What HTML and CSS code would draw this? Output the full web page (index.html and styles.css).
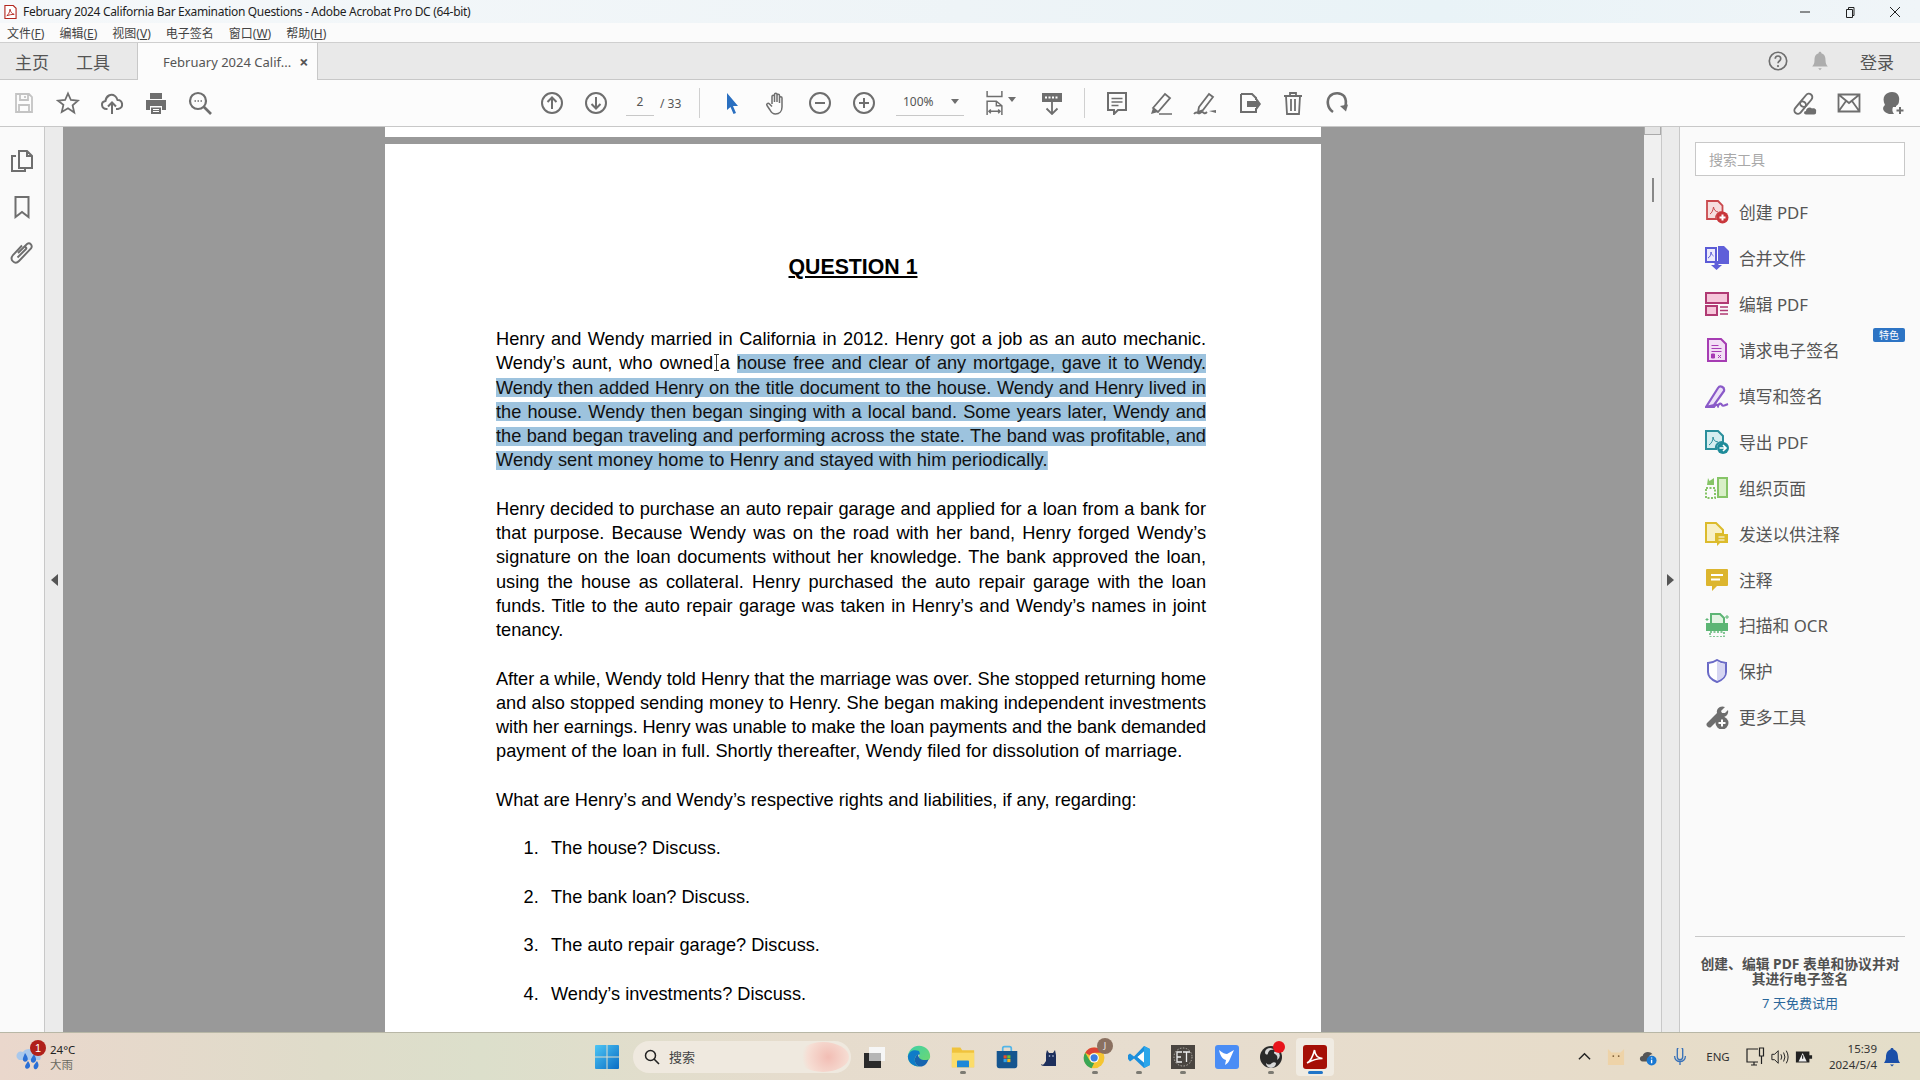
FILE: index.html
```html
<!DOCTYPE html>
<html lang="zh-CN">
<head>
<meta charset="utf-8">
<title>Adobe Acrobat Pro DC</title>
<link rel="stylesheet" href="styles.css">
</head>
<body>
<div class="app">
  <header class="titlebar">
    <svg class="pdf-mini" viewBox="0 0 14 16"><path d="M1 1h9l3 3v11H1z" fill="#fff" stroke="#b3261e" stroke-width="1.200"/><path d="M3 12c2-1 3-4 3.500-7 .5 3 2 5 4.500 5.500-3 0-5 .5-8 1.500z" fill="none" stroke="#b3261e"/></svg>
    <span class="title-text">February 2024 California Bar Examination Questions - Adobe Acrobat Pro DC (64-bit)</span>
    <div class="win-controls">
      <svg viewBox="0 0 12 12"><path d="M1 6h10" stroke="#222" stroke-width="1"/></svg>
      <svg viewBox="0 0 12 12"><path d="M2.500 3.500h6v8h-6zM4.500 3.500v-2h5.500v8h-1.500" fill="none" stroke="#222"/></svg>
      <svg viewBox="0 0 12 12"><path d="M1 1l10 10M11 1L1 11" stroke="#222" fill="none"/></svg>
    </div>
  </header>
  <nav class="menubar">
    <span>文件(<u>F</u>)</span><span>编辑(<u>E</u>)</span><span>视图(<u>V</u>)</span><span>电子签名</span><span>窗口(<u>W</u>)</span><span>帮助(<u>H</u>)</span>
  </nav>
  <div class="tabbar">
    <span class="tab-link first">主页</span>
    <span class="tab-link">工具</span>
    <div class="tab-active"><span class="tab-name">February 2024 Calif...</span><b class="tab-x">×</b></div>
    <div class="tab-right">
      <svg class="ic" viewBox="0 0 24 24"><circle cx="12" cy="12" r="9.500" fill="none" stroke="#6e6e6e" stroke-width="1.800"/><path d="M9 9.500c0-4 6-4 6 0 0 2.500-3 2.500-3 5" fill="none" stroke="#6e6e6e" stroke-width="1.800"/><circle cx="12" cy="17.500" r="1.200" fill="#6e6e6e"/></svg>
      <svg class="ic bell" viewBox="0 0 24 24"><path d="M12 2c1 0 1.500.7 1.500 1.500C17 4.500 18 7.500 18 11c0 4 1 5.500 2.500 7h-17C5 16.500 6 15 6 11c0-3.500 1-6.500 4.500-7.500C10.500 2.700 11 2 12 2zM10 20h4l-2 2z" fill="#adadad"/></svg>
      <span class="login">登录</span>
    </div>
  </div>
  <div class="toolbar">
    <div class="tool-slot"><svg class="ic" viewBox="0 0 24 24"><path d="M4 3h13l3 3v15H4zM8 3v6h8V3M13 5v2M7 21v-7h10v7" fill="none" stroke="#c4c4c4" stroke-width="1.800"/></svg></div>
    <div class="tool-slot"><svg class="ic" viewBox="0 0 24 24"><path d="M12 2.500l2.900 6.500 7 .7-5.300 4.700 1.600 7L12 17.200l-6.200 3.700 1.600-7L2.100 9.700l7-.7z" fill="none" stroke="#6e6e6e" stroke-width="1.800"/></svg></div>
    <div class="tool-slot"><svg class="ic" viewBox="0 0 24 24"><path d="M7.500 18H6.500C1.500 18 0 11 5.500 10 6 5 11 2 15 5c1.500 1 2 2.500 2.500 4 5-.5 7 7.500 .5 9h-2M12 23V12M8 15.500L12 11.500l4 4" fill="none" stroke="#6e6e6e" stroke-width="2"/></svg></div>
    <div class="tool-slot"><svg class="ic" viewBox="0 0 24 24"><path d="M6 2h12v6H6zM2 9h20v10h-4v-4H6v4H2zM7 16.500h10V23H7z" fill="#6e6e6e"/><path d="M9 18.500h6M9 20.500h6" stroke="#fff"/></svg></div>
    <div class="tool-slot"><svg class="ic" viewBox="0 0 24 24"><circle cx="10" cy="10" r="8" fill="none" stroke="#6e6e6e" stroke-width="2.200"/><path d="M16 16l7 7" stroke="#6e6e6e" stroke-width="2.600"/><path d="M6.500 10h1.500M9.500 10h1.500M12.500 10h1.500" stroke="#6e6e6e" stroke-width="1.500"/></svg></div>

    <div class="tool-group center">
      <div class="tool-slot"><svg class="ic" viewBox="0 0 24 24"><circle cx="12" cy="12" r="10" fill="none" stroke="#6e6e6e" stroke-width="2"/><path d="M12 18V6.500M7.500 11l4.500-4.500 4.500 4.500" fill="none" stroke="#6e6e6e" stroke-width="2"/></svg></div>
      <div class="tool-slot"><svg class="ic" viewBox="0 0 24 24"><circle cx="12" cy="12" r="10" fill="none" stroke="#6e6e6e" stroke-width="2"/><path d="M12 6v11.500M7.500 13l4.500 4.500 4.500-4.500" fill="none" stroke="#6e6e6e" stroke-width="2"/></svg></div>
      <div class="page-num"><span class="page-input">2</span><span class="page-total">/ 33</span></div>
      <div class="sep"></div>
      <div class="tool-slot"><svg class="ic" viewBox="0 0 24 24"><path d="M7 2l11 13h-5l3 7-2.500 1-3-7L7 19z" fill="#2a6fc0"/></svg></div>
      <div class="tool-slot"><svg class="ic" viewBox="0 0 24 24"><path d="M8 13V5.500c0-1.800 2.500-1.800 2.500 0V11M10.500 11V3.500c0-1.800 2.500-1.800 2.500 0V11M13 11V4.500c0-1.800 2.500-1.800 2.500 0V12M15.500 12V7c0-1.800 2.500-1.800 2.500 0v9c0 4-2.500 7-6.500 7-3 0-4.500-2-5.500-4L3 14.500c-1-1.500 1-3 2.500-1.500L8 15.500" fill="none" stroke="#6e6e6e" stroke-width="1.500"/></svg></div>
      <div class="tool-slot"><svg class="ic" viewBox="0 0 24 24"><circle cx="12" cy="12" r="10" fill="none" stroke="#6e6e6e" stroke-width="2"/><path d="M7 12h10" stroke="#6e6e6e" stroke-width="2"/></svg></div>
      <div class="tool-slot"><svg class="ic" viewBox="0 0 24 24"><circle cx="12" cy="12" r="10" fill="none" stroke="#6e6e6e" stroke-width="2"/><path d="M7 12h10M12 7v10" stroke="#6e6e6e" stroke-width="2"/></svg></div>
      <div class="zoom-box"><span>100%</span><i class="caret"></i></div>
      <div class="tool-slot fit"><svg class="ic fit-ic" viewBox="0 0 20 26"><path d="M2 0v6h16V0M2 26V11h10l6 5v10M12 11v5h6M4 22h12M6 20l-2 2 2 2M14 20l2 2-2 2" fill="none" stroke="#6e6e6e" stroke-width="1.600"/></svg><i class="caret small"></i></div>
      <div class="tool-slot"><svg class="ic" viewBox="0 0 24 24"><path d="M2 2h20v9H2z" fill="#6e6e6e"/><path d="M5 6.500h14" stroke="#fff" stroke-width="2" stroke-dasharray="2 1.500"/><path d="M12 11v12M6.500 17.500L12 23l5.500-5.500" fill="none" stroke="#6e6e6e" stroke-width="1.800"/></svg></div>
      <div class="sep second"></div>
      <div class="tool-slot"><svg class="ic" viewBox="0 0 24 24"><path d="M3 2h18v17h-8l-4 4v-4H3z" fill="none" stroke="#6e6e6e" stroke-width="2"/><path d="M6.500 7.500h11M6.500 11h11M6.500 14.500h7" stroke="#6e6e6e" stroke-width="1.500"/></svg></div>
      <div class="tool-slot"><svg class="ic" viewBox="0 0 24 24"><path d="M4 17L16 3l5 4L9 21z" fill="none" stroke="#6e6e6e" stroke-width="1.800"/><path d="M4 17l5 4-7 2z" fill="#6e6e6e"/><path d="M10 23h13" stroke="#6e6e6e" stroke-width="1.500"/></svg></div>
      <div class="tool-slot"><svg class="ic" viewBox="0 0 24 24"><path d="M6 16L16 3l4 3L10 19l-5 2zM1 23c3-4 4 1 6-1s3-1 4 0 2 0 3-1" fill="none" stroke="#6e6e6e" stroke-width="1.800"/><path d="M16 20l7-1v3z" fill="#6e6e6e"/></svg></div>
      <div class="tool-slot"><svg class="ic" viewBox="0 0 24 24"><path d="M4 3h11l4 4v2M19 17v4H4V3" fill="none" stroke="#6e6e6e" stroke-width="2"/><path d="M10 10h9V6l5 7-5 7v-4h-9z" fill="#6e6e6e"/></svg></div>
      <div class="tool-slot"><svg class="ic" viewBox="0 0 24 24"><path d="M3 5h18M9 5V2h6v3M5 5l1 18h12l1-18M10 8v12M14 8v12" fill="none" stroke="#6e6e6e" stroke-width="1.800"/></svg></div>
      <div class="tool-slot"><svg class="ic" viewBox="0 0 24 24"><path d="M8 21C2 17 1.500 9 5 5c4-4 11-3.500 14 0 2 3 2.500 7 1 11" fill="none" stroke="#6e6e6e" stroke-width="2.600"/><path d="M15 15l6 5.500 2-7z" fill="#6e6e6e"/></svg></div>
    </div>
    <div class="tool-group end">
      <div class="tool-slot"><svg class="ic" viewBox="0 0 24 24"><g transform="rotate(-50 11 12)" fill="none" stroke="#6e6e6e" stroke-width="1.900"><rect x="-2" y="8.500" width="14" height="7" rx="3.500"/><rect x="7" y="8.500" width="15" height="7" rx="3.500"/></g><path d="M13 23.500c-2.500 0-2.500-3.500 0-3.500 0-3 4-4.500 6-2.500 2.500-1 5 1 4 3.500 .5 1-.5 2.500-2 2.500z" fill="#6e6e6e"/></svg></div>
      <div class="tool-slot"><svg class="ic" viewBox="0 0 24 24"><path d="M1.500 3.500h21v17h-21zM1.500 3.500L12 12l10.500-8.500M1.500 20.500L9 10M22.500 20.500L15 10" fill="none" stroke="#6e6e6e" stroke-width="1.800"/></svg></div>
      <div class="tool-slot"><svg class="ic" viewBox="0 0 24 24"><path d="M11 1c6 0 8 5 7 9 0 2-1 4-3 5v1h-3c-1 2-1 5 1 7H8c-7-2-7-7-4-9C0 6 5 1 11 1z" fill="#6e6e6e"/><path d="M19 16v7M15.500 19.500h7" stroke="#6e6e6e" stroke-width="2"/></svg></div>
    </div>
  </div>
  <main class="workspace">
    <aside class="rail">
      <svg class="ic" viewBox="0 0 24 24"><path d="M9 17V2h8l5 5v12H9zM17 2v5h5M6 7H2v15h13v-3" fill="none" stroke="#6e6e6e" stroke-width="2"/></svg>
      <svg class="ic" viewBox="0 0 24 24"><path d="M5.500 2h13v20L12 17l-6.500 5z" fill="none" stroke="#6e6e6e" stroke-width="2"/></svg>
      <svg class="ic" viewBox="0 0 24 24"><path d="M8 12l9-9c3-2 6 1.500 4 4.500L9 20c-4 4-10-1-6-6l9-9.500M7.500 16.500L16 8c1-1-.5-2.500-1.500-1.500" fill="none" stroke="#6e6e6e" stroke-width="1.900"/></svg>
    </aside>
    <div class="strip left"><i class="tri-left"></i></div>
    <section class="doc">
      <div class="prev-page"></div>
      <article class="page">
        <h1 class="q-title">QUESTION 1</h1>
        <div class="para">
          <div class="ln">Henry and Wendy married in California in 2012. Henry got a job as an auto mechanic.</div>
          <div class="ln">Wendy’s aunt, who owned<span class="ibeam"></span> a <mark class="sel">house free and clear of any mortgage, gave it to Wendy.</mark></div>
          <div class="ln sel-line">Wendy then added Henry on the title document to the house. Wendy and Henry lived in</div>
          <div class="ln sel-line">the house. Wendy then began singing with a local band. Some years later, Wendy and</div>
          <div class="ln sel-line">the band began traveling and performing across the state. The band was profitable, and</div>
          <div class="ln last loose-a"><mark class="sel">Wendy sent money home to Henry and stayed with him periodically.</mark></div>
        </div>
        <div class="para">
          <div class="ln">Henry decided to purchase an auto repair garage and applied for a loan from a bank for</div>
          <div class="ln">that purpose. Because Wendy was on the road with her band, Henry forged Wendy’s</div>
          <div class="ln">signature on the loan documents without her knowledge. The bank approved the loan,</div>
          <div class="ln">using the house as collateral. Henry purchased the auto repair garage with the loan</div>
          <div class="ln">funds. Title to the auto repair garage was taken in Henry’s and Wendy’s names in joint</div>
          <div class="ln last">tenancy.</div>
        </div>
        <div class="para">
          <div class="ln tight-a">After a while, Wendy told Henry that the marriage was over. She stopped returning home</div>
          <div class="ln">and also stopped sending money to Henry. She began making independent investments</div>
          <div class="ln tight-b">with her earnings. Henry was unable to make the loan payments and the bank demanded</div>
          <div class="ln last loose-b">payment of the loan in full. Shortly thereafter, Wendy filed for dissolution of marriage.</div>
        </div>
        <div class="para"><div class="ln last">What are Henry’s and Wendy’s respective rights and liabilities, if any, regarding:</div></div>
        <ol class="qs">
          <li>The house? Discuss.</li>
          <li>The bank loan? Discuss.</li>
          <li>The auto repair garage? Discuss.</li>
          <li>Wendy’s investments? Discuss.</li>
        </ol>
      </article>
    </section>
    <div class="vscroll"><div class="vs-btn"></div><div class="vs-thumb"></div></div>
    <div class="strip right"><i class="tri-right"></i></div>
    <aside class="tools">
      <div class="tool-search">搜索工具</div>
      <ul class="tool-list">
        <li><svg class="ti" viewBox="0 0 24 24"><path d="M2 1h11l4.500 4.500V12a6 6 0 0 0-6.500 7H2z" fill="#f6dede" stroke="#c9484c" stroke-width="1.800"/><path d="M5 14c2-1 3-4 3.500-7 .5 3 2 4.500 4.500 5" fill="none" stroke="#c9484c"/><circle cx="17.500" cy="17.500" r="6" fill="#c9373c"/><path d="M14.500 17.500h6M17.500 14.500v6" stroke="#fff" stroke-width="2"/></svg><span>创建 PDF</span></li>
        <li><svg class="ti" viewBox="0 0 24 24"><path d="M1 2h10v14H1z" fill="#eceafc" stroke="#5b5bd6" stroke-width="2"/><path d="M13 0h6l5 5v13H13z" fill="#5f5fd9"/><path d="M3 12c2-1 3-3 3-6 .5 2 1 3 2.500 4" fill="none" stroke="#5b5bd6"/><path d="M9.500 15h4v4h3.500l-5.500 5L6 19h3.500z" fill="#5f5fd9"/></svg><span>合并文件</span></li>
        <li><svg class="ti" viewBox="0 0 24 24"><path d="M1 1h22v10H1z" fill="#f6c6da" stroke="#b03a73" stroke-width="2"/><path d="M1 14h11v9H1z" fill="#f6c6da" stroke="#b03a73" stroke-width="2"/><path d="M15 15h8M15 18.500h8M15 22h8" stroke="#b03a73" stroke-width="1.300"/></svg><span>编辑 PDF</span></li>
        <li><svg class="ti" viewBox="0 0 24 24"><path d="M3 1h13l5 5v17H3z" fill="#f2def5" stroke="#a63cb3" stroke-width="2"/><path d="M6.500 7.500h7M6.500 10.500h10M6.500 13.500h10" stroke="#a63cb3" stroke-width="1.200"/><path d="M6.500 16h3v4h-3zM13 17l3 3M16 17l-3 3" fill="#a63cb3" stroke="#a63cb3"/></svg><span>请求电子签名</span><em class="badge">特色</em></li>
        <li><svg class="ti" viewBox="0 0 24 24"><path d="M1 23L13 4c2-3 7-1 6 3L9 21z" fill="#ece1f8" stroke="#8a5ac8" stroke-width="2.200"/><path d="M1 23h8c2-3 3-3 4-1 1-3 3-3 4-1s3 0 6-1" fill="none" stroke="#8a5ac8" stroke-width="2.200"/></svg><span>填写和签名</span></li>
        <li><svg class="ti" viewBox="0 0 24 24"><path d="M1 1h12l5 5v6a6 6 0 0 0-7 7H1z" fill="#d6eef0" stroke="#2b8f9c" stroke-width="2"/><path d="M4 15c3-2 4-5 4-8 .5 3 1.500 4.500 5 5" fill="none" stroke="#2b8f9c"/><circle cx="18" cy="18" r="6" fill="#1f8c9a"/><path d="M14.500 18h6M18 15l3 3-3 3" fill="none" stroke="#fff" stroke-width="1.600"/></svg><span>导出 PDF</span></li>
        <li><svg class="ti" viewBox="0 0 24 24"><path d="M13 2h9v19h-9z" fill="#d9efc8" stroke="#86c467" stroke-width="2"/><path d="M1 12h9v10H1z" fill="none" stroke="#86c467" stroke-width="2" stroke-dasharray="2 1.500"/><path d="M3 2l1.500 3L9 2v7H2z" fill="#86c467"/></svg><span>组织页面</span></li>
        <li><svg class="ti" viewBox="0 0 24 24"><path d="M1 1h10l7 7v4h-7v8H1z" fill="#f8f0c5" stroke="#dcbb2c" stroke-width="2"/><path d="M10 12h13v9h-8l-3 3v-3h-2z" fill="#dcbb2c"/><path d="M13.500 15h6M13.500 18h6" stroke="#fff"/></svg><span>发送以供注释</span></li>
        <li><svg class="ti" viewBox="0 0 24 24"><path d="M2 1h20q1 0 1 1v15q0 1-1 1H12l-5 5v-5H2q-1 0-1-1V2q0-1 1-1z" fill="#dcb52e"/><path d="M6 7h12M6 11.500h9" stroke="#fff" stroke-width="1.800"/></svg><span>注释</span></li>
        <li><svg class="ti" viewBox="0 0 24 24"><path d="M6 1h9l4 4v6H6z" fill="#e2f3e2" stroke="#5cb574" stroke-width="2"/><path d="M1 10h22v8H1z" fill="#5cb574"/><path d="M5 19h14v5H5z" fill="none" stroke="#5cb574" stroke-width="1.500" stroke-dasharray="2 1.500"/><path d="M22 2v4M20 4h4M2 5v3M.5 6.500h3" stroke="#5cb574"/></svg><span>扫描和 OCR</span></li>
        <li><svg class="ti" viewBox="0 0 24 24"><path d="M12 1c3 2 6 3 9 3v9c0 5-4 8-9 10-5-2-9-5-9-10V4c3 0 6-1 9-3z" fill="#fff" stroke="#6a6ac6" stroke-width="2"/><path d="M12 2c3 2 5 3 8 3v8c0 5-3 7-8 9z" fill="#d6d6f2"/></svg><span>保护</span></li>
        <li><svg class="ti" viewBox="0 0 24 24"><path d="M2 18L12 8c-1-4 3-8 8-6l-4 4 1 2 3 0 3-3c1 4-2 8-7 7L6 22c-2 2-6-2-4-4z" fill="#6e6e6e"/><circle cx="17" cy="18" r="6.500" fill="#6e6e6e"/><path d="M13.500 18h7M17 14.500v7" stroke="#fff" stroke-width="2"/></svg><span>更多工具</span></li>
      </ul>
      <div class="promo">
        <p class="promo-text">创建、编辑 PDF 表单和协议并对其进行电子签名</p>
        <p class="promo-link">7 天免费试用</p>
      </div>
    </aside>
  </main>
  <footer class="taskbar">
    <div class="weather">
      <svg class="wx" viewBox="0 0 28 28"><path d="M1 15c-2-4 2-8 6-6 2-4 10-4 12 0 4 0 7 4 5 8H3z" fill="#a9c8ec"/><path d="M9 10c2 3 4 6 2 8s-5 0-4-3zM18 11c2 4 3 6 1 8s-5 0-4-3zM12 18c2 3 3 5 1 7s-5 0-3.500-3zM21 18c1 2 2.500 4 .5 7s-5 0-3.500-3z" fill="#2a6fd6"/></svg>
      <b class="wx-badge">1</b>
      <div class="wx-text"><span>24°C</span><span class="muted">大雨</span></div>
    </div>
    <svg class="win-logo" viewBox="0 0 24 24"><defs><linearGradient id="wl" x1="0" y1="0" x2="1" y2="1"><stop offset="0" stop-color="#4dc6f5"/><stop offset="1" stop-color="#0a6cc4"/></linearGradient></defs><path d="M0 1q0-1 1-1h10.500v11.500H0zM12.500 0H23q1 0 1 1v10.500H12.500zM0 12.500h11.500V24H1q-1 0-1-1zM12.500 12.500H24V23q0 1-1 1H12.500z" fill="url(#wl)"/></svg>
    <div class="task-search">
      <svg class="tsi" viewBox="0 0 16 16"><circle cx="6.500" cy="6.500" r="5" fill="none" stroke="#222" stroke-width="1.500"/><path d="M10 10l5 5" stroke="#222" stroke-width="1.600"/></svg>
      <span>搜索</span><i class="blob"></i>
    </div>
    <div class="apps">
      <div class="app-slot"><svg viewBox="0 0 24 24"><path d="M6 2h16v14H6z" fill="#f6f6f6"/><path d="M1 8h17v15H1z" fill="#2a2a2a"/><path d="M6 8h12v8H6z" fill="#b5b5b5"/></svg></div>
      <div class="app-slot"><svg viewBox="0 0 28 28"><defs><linearGradient id="eg" x1="0" y1="0" x2="1" y2="1"><stop offset="0" stop-color="#3dd0a8"/><stop offset="1" stop-color="#75d86a"/></linearGradient></defs><path d="M14 1c8 0 13 6 13 12 0 4-3 6-6 6-4 0-7-2-7-5 0-1 0-2 1-3-3 0-6 2-6 6s2 7 5 8C7 25 1 20 1 13 2 6 7 1 14 1z" fill="url(#eg)"/><path d="M1 13C3 6 9 5 14 7c1 2 1 3 1 4-3 0-6 2-6 6s2 7 5 8C7 25 1 20 1 13z" fill="#0f7cc8"/><path d="M14 25c-3-1-5-4-5-8 0-3 2-5 4-6 0 5 5 8 12 6-2 6-6 9-11 8z" fill="#1664b0"/></svg></div>
      <div class="app-slot"><svg viewBox="0 0 28 28"><path d="M1 3h10l2 3h14v20H1z" fill="#f0c33c"/><path d="M1 9h26v17H1z" fill="#fbdc6a"/><path d="M8 18h12q1 0 1 1v7H7v-7q0-1 1-1z" fill="#1e88d8"/></svg><i class="run"></i></div>
      <div class="app-slot"><svg viewBox="0 0 28 28"><path d="M9 8V4q0-2 2-2h6q2 0 2 2v4" fill="none" stroke="#52b5e8" stroke-width="2"/><path d="M2 7h24v17q0 3-3 3H5q-3 0-3-3z" fill="#15558f"/><path d="M10 12h3.700v3.700H10z" fill="#e8502c"/><path d="M14.300 12H18v3.700h-3.700z" fill="#6fc02e"/><path d="M10 16.300h3.700V20H10z" fill="#2fa5e8"/><path d="M14.300 16.300H18V20h-3.700z" fill="#f5b81c"/></svg></div>
      <div class="app-slot"><svg viewBox="0 0 24 24"><path d="M8 5l2 3h4l2-3 1 5v11H5c-2 0-3-1-3-2 1 1 2 1 3 0l2-3V9z" fill="#1d2f5c"/><circle cx="10.500" cy="11" r=".8" fill="#cbd7ee"/><circle cx="14" cy="11" r=".8" fill="#cbd7ee"/></svg></div>
      <div class="app-slot"><svg viewBox="0 0 28 28"><circle cx="13" cy="15" r="12" fill="#f5c531"/><path d="M13 3a12 12 0 0 1 10.400 6H13a6 6 0 0 0-5.200 3L2.600 9A12 12 0 0 1 13 3z" fill="#dc4336"/><path d="M2.600 9l5.200 9A6 6 0 0 0 13 21l-3 6A12 12 0 0 1 2.600 9z" fill="#3aa655"/><circle cx="13" cy="15" r="5.500" fill="#fff"/><circle cx="13" cy="15" r="4.200" fill="#3a7de0"/></svg><b class="avatar">J</b><i class="run"></i></div>
      <div class="app-slot"><svg viewBox="0 0 24 24"><path d="M17 1l6 3v16l-6 3-10-9.500-4 3L1 14v-4l2-1.500 4 3z" fill="#1c8fdc"/><path d="M17 6.500L10.500 12l6.500 5.500z" fill="#f2f2f2"/><path d="M17 1l6 3v16l-6 3z" fill="#2ba6ea"/><path d="M17 6.500v11L10.500 12z" fill="#fff" opacity=".85"/></svg><i class="run"></i></div>
      <div class="app-slot"><svg viewBox="0 0 24 24"><path d="M0 0h24v24H0z" fill="#4a4540"/><circle cx="12" cy="12" r="9" fill="none" stroke="#b9b4ad" stroke-dasharray="1.500 1.500"/><path d="M11 7H6v10h5M6 12h4M12 7h7M15.500 7v10" fill="none" stroke="#eee" stroke-width="1.300"/></svg><i class="run"></i></div>
      <div class="app-slot"><svg viewBox="0 0 24 24"><path d="M3 0h18q3 0 3 3v18q0 3-3 3H3q-3 0-3-3V3q0-3 3-3z" fill="#4a8df5"/><path d="M4 5c4 3 6 4 8 4l7-4-4 9c-1 3-3 5-5 6l1-5C7 14 5 10 4 5z" fill="#fff"/></svg></div>
      <div class="app-slot"><svg viewBox="0 0 24 24"><circle cx="12" cy="12" r="11" fill="#2a2a2a"/><path d="M6 8a5 5 0 0 1 9-3c-3-1-5 0-6 3 0 2-2 2-3 0zM17 18a5 5 0 0 1-10 0c2 2 4 2 6 0 1-1 3-1 4 0zM18 6a5 5 0 0 1 0 9c1-3 0-5-2-6-2-1-1-3 2-3z" fill="#d8d8d8"/></svg><b class="red-dot"></b><i class="run"></i></div>
      <div class="app-slot active"><svg viewBox="0 0 24 24"><path d="M3 0h18q3 0 3 3v18q0 3-3 3H3q-3 0-3-3V3q0-3 3-3z" fill="#a50f06"/><path d="M4 18c4-2 6-7 7.500-13 .5 5 3 8 8 8.500-5 0-10 1.500-15.500 4.500z" fill="none" stroke="#fff" stroke-width="1.600"/></svg><i class="run blue"></i></div>
    </div>
    <div class="tray">
      <div class="tray-slot w32"><svg class="t14" viewBox="0 0 14 14"><path d="M1 10l6-6 6 6" fill="none" stroke="#222" stroke-width="1.500"/></svg></div>
      <div class="tray-slot w32"><svg class="t18" viewBox="0 0 20 20"><path d="M1 1l4 4h10l4-4v18H1z" fill="#eed3a8"/><circle cx="7" cy="9" r="1" fill="#7a5a33"/><circle cx="13" cy="9" r="1" fill="#7a5a33"/></svg></div>
      <div class="tray-slot w32"><svg class="t18" viewBox="0 0 20 20"><path d="M4 15c-4 0-4-6 0-6 1-5 8-6 11-2-3 0-5 3-5 8z" fill="#555"/><circle cx="14" cy="14" r="5.500" fill="#1a78d2"/><path d="M14 13v4M14 10.500v1.200" stroke="#fff" stroke-width="1.500"/></svg></div>
      <div class="tray-slot w32"><svg class="t18" viewBox="0 0 20 20"><path d="M7 2a3 3 0 0 1 6 0v8a3 3 0 0 1-6 0zM4 9c0 8 12 8 12 0M10 15v4" fill="none" stroke="#3a72b8" stroke-width="1.500"/></svg></div>
      <div class="tray-slot w44 eng">ENG</div>
      <div class="tray-slot w32"><svg class="t20" viewBox="0 0 20 20"><path d="M12 2H1v13h11M5 18h6M8 15v3" fill="none" stroke="#222" stroke-width="1.200"/><path d="M13.500 1h4v8h-4zM15.500 9v8" fill="none" stroke="#222" stroke-width="1.200"/></svg></div>
      <div class="tray-slot w16"><svg class="t18" viewBox="0 0 20 20"><path d="M1 7h3l4-4v14l-4-4H1zM11 7q2 3 0 6M14 5q3 5 0 10M17 3q4 7 0 14" fill="none" stroke="#222" stroke-width="1.100"/></svg></div>
      <div class="tray-slot w32"><svg class="t18" viewBox="0 0 20 20"><path d="M1 4h15v12H1zM16 8h3v4h-3z" fill="#222"/><path d="M8.500 5.500L4 15h9z" fill="#eee"/><path d="M8.500 8v4" stroke="#222" stroke-width="1.300"/></svg></div>
      <div class="clock"><span>15:39</span><span>2024/5/4</span></div>
      <div class="tray-slot w30"><svg class="t20" viewBox="0 0 20 20"><path d="M10 1c1 0 1.500.5 1.500 1.500C15 3.500 16 7 16 10c0 3 1 4.500 2 6H2c1-1.500 2-3 2-6 0-3 1-6.500 4.500-7.500C8.500 1.500 9 1 10 1zM8 17.500h4l-2 2z" fill="#1b4fa8"/></svg></div>
    </div>
  </footer>
</div>
</body>
</html>
```
FILE: styles.css
```css
* { box-sizing: border-box; }
html, body { margin: 0; height: 100%; overflow: hidden; }
body { font-family: "Noto Sans", "Noto Sans CJK SC", sans-serif; color: #444; }
.app { width: 1920px; height: 1080px; display: flex; flex-direction: column; overflow: hidden; }
svg { display: block; flex: none; }

.titlebar { height: 23px; display: flex; align-items: center; padding-left: 4px; background: linear-gradient(90deg, #f5f8fa 0%, #eef4f7 50%, #e9f3f7 75%, #f0f5f8 100%); }
.pdf-mini { width: 13px; height: 16px; margin-right: 6px; }
.title-text { font-size: 12px; letter-spacing: -0.31px; color: #1e1e1e; white-space: nowrap; }
.win-controls { margin-left: auto; display: flex; gap: 33px; padding-right: 19px; }
.win-controls svg { width: 12px; height: 12px; }

.menubar { height: 20px; display: flex; align-items: center; gap: 15px; padding-left: 7px; background: #fbfbfb; font-size: 12px; color: #444; border-bottom: 1px solid #cfcfcf; }

.tabbar { height: 37px; display: flex; align-items: stretch; background: #e9e9e9; border-bottom: 1px solid #c8c8c8; }
.tab-link { width: 62px; font-size: 17px; color: #555; display: flex; align-items: center; }
.tab-link.first { width: 76px; padding-left: 15px; }
.tab-active { width: 181px; margin-left: -1px; margin-bottom: -1px; background: #fcfcfc; border-left: 1px solid #c8c8c8; border-right: 1px solid #c8c8c8; display: flex; align-items: center; padding-left: 25px; font-size: 13px; color: #555; }
.tab-name { white-space: nowrap; }
.tab-x { margin-left: 8px; font-size: 16px; color: #555; }
.tab-right { margin-left: auto; display: flex; align-items: center; padding-right: 26px; }
.tab-right .ic { width: 22px; height: 22px; margin-right: 20px; }
.tab-right .bell { margin-right: 29px; }
.login { font-size: 17px; color: #555; }

.toolbar { height: 47px; display: flex; align-items: center; background: #fcfcfc; border-bottom: 1px solid #c8c8c8; padding-left: 2px; }
.tool-slot { width: 44px; display: flex; justify-content: center; align-items: center; position: relative; }
.ic { width: 24px; height: 24px; }
.fit-ic { width: 19px; }
.tool-group { display: flex; align-items: center; }
.tool-group.center { margin-left: 308px; }
.tool-group.end { margin-left: auto; padding-right: 5px; }
.page-num { width: 81px; display: flex; align-items: center; font-size: 12px; color: #555; }
.page-input { width: 28px; margin-left: 8px; text-align: center; border-bottom: 1px solid #c8c8c8; padding: 3px 0 5px; }
.page-total { margin-left: 6px; }
.sep { width: 1px; height: 30px; background: #d0d0d0; margin: 0 10px 0 0; }
.sep.second { margin-left: 10px; }
.zoom-box { width: 68px; margin-left: 10px; margin-right: 8px; border-bottom: 1px solid #c8c8c8; display: flex; align-items: center; font-size: 12px; color: #555; padding: 3px 0 5px 7px; }
.caret { border: 4.500px solid transparent; border-top: 5px solid #6e6e6e; border-bottom: 0; margin-left: 17px; }
.caret.small { position: absolute; right: 0; top: 6px; margin: 0; }
.fit { margin-right: 14px; }

.workspace { flex: 1; min-height: 0; display: flex; }
.rail { width: 45px; background: #fafafa; border-right: 1px solid #c8c8c8; display: flex; flex-direction: column; align-items: center; gap: 22px; padding-top: 22px; }
.strip { background: #ebebeb; display: flex; align-items: center; justify-content: center; position: relative; }
.strip.left { width: 18px; }
.strip.right { width: 19px; border-left: 1px solid #c8c8c8; border-right: 1px solid #c8c8c8; }
.tri-left { border: 6px solid transparent; border-right: 7px solid #555; border-left: 0; }
.tri-right { border: 6px solid transparent; border-left: 7px solid #555; border-right: 0; }

.doc { width: 1581px; background: #999; overflow: hidden; padding-left: 322px; }
.prev-page { width: 936px; height: 10px; background: #fff; margin-bottom: 7px; }
.page { width: 936px; background: #fff; padding: 111px 0 120px 111px; font-family: "Liberation Sans", Arial, sans-serif; color: #000; font-size: 18.200px; }
.q-title { margin: 0 0 48px; width: 710px; padding-left: 4px; text-align: center; font-size: 21.300px; line-height: 24px; font-weight: 700; text-decoration: underline; }
.para { width: 710px; margin-bottom: 24.250px; }
.ln { height: 24.250px; line-height: 24.250px; text-align: justify; text-align-last: justify; white-space: nowrap; position: relative; }
.ln.last { text-align-last: left; }
.tight-a { letter-spacing: -0.05px; }
.tight-b { letter-spacing: -0.11px; }
.loose-a { letter-spacing: 0.1px; }
.loose-b { letter-spacing: 0.07px; }
.sel, .sel-line { background: linear-gradient(#9dc3de, #9dc3de) center / 100% 19px no-repeat; color: #111; }
.ibeam { display: inline-block; width: 0; height: 0; position: relative; }
.ibeam::before { content: ""; position: absolute; left: 1px; top: -15px; width: 5px; height: 15px; border-top: 1px solid #333; border-bottom: 1px solid #333; background: linear-gradient(#333, #333) center / 1px 100% no-repeat; }
.qs { margin: 0; padding: 0; list-style: none; counter-reset: q; }
.qs li { counter-increment: q; height: 48.500px; line-height: 24.250px; padding-left: 55px; position: relative; }
.qs li::before { content: counter(q) "."; position: absolute; left: 27.500px; }

.vscroll { width: 17px; background: #f0f0f0; position: relative; flex: none; }
.vs-btn { height: 8px; background: #e4e4e4; border: 1px solid #aaa; border-top: 0; }
.vs-thumb { width: 2px; height: 24px; background: #888; margin: 43px 0 0 8px; }

.tools { width: 240px; background: #fafafa; padding: 15px 15px 0; display: flex; flex-direction: column; }
.tool-search { height: 34px; background: #fff; border: 1px solid #c8c8c8; font-size: 14px; color: #a8a8a8; display: flex; align-items: center; padding-left: 13px; }
.tool-list { list-style: none; margin: 13.500px 0 0; padding: 0; flex: 1; }
.tool-list li { height: 45.900px; display: flex; align-items: center; padding-left: 10px; font-size: 16.800px; color: #555; position: relative; }
.ti { width: 24px; height: 24px; margin-right: 10px; }
.badge { position: absolute; right: 0; top: 1px; width: 32px; height: 14px; background: #2d74c4; color: #fff; font-style: normal; font-size: 10px; line-height: 14px; text-align: center; border-radius: 2px; }
.promo { border-top: 1px solid #c8c8c8; height: 96px; padding-top: 19px; text-align: center; }
.promo p { margin: 0; }
.promo-text { font-size: 13.800px; line-height: 15px; font-weight: 700; color: #505050; padding: 0 1px; }
.promo-link { font-size: 13px; line-height: 18px; color: #2a679b; margin-top: 8px !important; }

.taskbar { height: 48px; flex: none; display: flex; align-items: center; background: linear-gradient(90deg, #ead7cc 0%, #dfdcca 17%, #dcdfcb 25%, #e6dccd 42%, #e7ddcf 60%, #e7dcc9 85%, #e4dec9 100%); border-top: 1px solid #b8b7a6; }
.weather { width: 595px; display: flex; align-items: center; padding-left: 16px; position: relative; }
.wx { width: 28px; height: 28px; margin-right: 1px; }
.wx-badge { position: absolute; left: 30px; top: -2px; width: 16px; height: 16px; border-radius: 50%; background: #b0201a; color: #fff; font-family: "Liberation Sans", sans-serif; font-weight: 400; font-size: 11px; line-height: 16px; text-align: center; }
.wx-text { display: flex; flex-direction: column; font-size: 11.500px; line-height: 15px; color: #222; margin-left: 5px; }
.muted { color: #6a6a60; }
.win-logo { width: 24px; height: 24px; }
.task-search { width: 218px; height: 32px; margin-left: 14px; border-radius: 16px; background: #efe9df; display: flex; align-items: center; padding-left: 11px; font-size: 13px; color: #444; position: relative; overflow: hidden; }
.tsi { width: 16px; height: 16px; margin-right: 9px; }
.blob { position: absolute; right: 2px; top: 1px; width: 52px; height: 30px; border-radius: 50%; background: radial-gradient(circle at 60% 50%, #f2bdb4, #f6ded4 60%, transparent 75%); }
.apps { display: flex; align-items: center; margin-left: 2px; }
.app-slot { width: 44px; height: 38px; display: flex; align-items: center; justify-content: center; position: relative; }
.app-slot svg { width: 24px; height: 24px; }
.app-slot.active { width: 38px; margin-left: 3px; background: #f0ebe2; border-radius: 4px; }
.run { position: absolute; bottom: 2px; left: 50%; margin-left: -3px; width: 6px; height: 3px; border-radius: 2px; background: #7c7a72; }
.run.blue { background: #1f74c8; width: 15px; margin-left: -7px; }
.avatar { position: absolute; left: 24px; top: 0; width: 16px; height: 16px; border-radius: 50%; background: #8a7060; color: #eee; font-size: 9px; font-weight: 400; line-height: 16px; text-align: center; }
.red-dot { position: absolute; left: 24px; top: 3px; width: 12px; height: 12px; border-radius: 50%; background: #e8141c; }
.tray { margin-left: auto; display: flex; align-items: center; padding-right: 13px; }
.tray-slot { display: flex; align-items: center; justify-content: center; height: 24px; color: #333; }
.w32 { width: 32px; } .w44 { width: 44px; } .w16 { width: 16px; } .w30 { width: 30px; }
.eng { font-size: 11.500px; }
.t14 { width: 13px; height: 13px; } .t18 { width: 18px; height: 18px; } .t20 { width: 20px; height: 20px; }
.clock { width: 57px; display: flex; flex-direction: column; align-items: flex-end; font-size: 11.500px; line-height: 16px; color: #333; white-space: nowrap; }
```
